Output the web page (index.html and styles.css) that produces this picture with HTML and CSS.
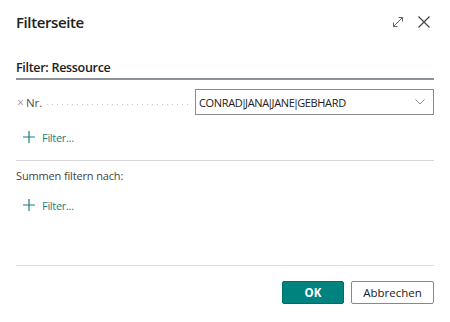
FILE: index.html
```html
<!DOCTYPE html>
<html>
<head>
<meta charset="utf-8">
<link rel="stylesheet" href="styles.css">
</head>
<body>
<div class="dialog">
  <div class="header">
    <div class="title">Filterseite</div>
    <div class="header-icons">
      <svg class="icon-expand" width="12" height="12" viewBox="0 0 12 12"><path d="M1.5 10.5 L10.5 1.5 M6.5 1.5 H10.5 V5.5 M1.5 6.5 V10.5 H5.5" fill="none" stroke="#666" stroke-width="1"/></svg>
      <svg class="icon-close" width="14" height="14" viewBox="0 0 14 14"><path d="M1.5 1.5 L12.5 12.5 M12.5 1.5 L1.5 12.5" fill="none" stroke="#444" stroke-width="1.2"/></svg>
    </div>
  </div>
  <div class="section-title">Filter: Ressource</div>
  <div class="filter-row">
    <div class="field-label"><span class="remove">×</span><span class="name">Nr.</span><span class="dots"></span></div>
    <div class="input">
      <span class="value">CONRAD<span class="pipe">|</span>JANA<span class="pipe">|</span>JANE<span class="pipe">|</span>GEBHARD</span>
      <svg class="chevron" width="10" height="6" viewBox="0 0 10 6"><path d="M0.5 0.5 L5 5 L9.5 0.5" fill="none" stroke="#888" stroke-width="1"/></svg>
    </div>
  </div>
  <div class="add-filter">
    <svg class="plus" width="12" height="12" viewBox="0 0 12 12"><path d="M6 0 V12 M0 6 H12" stroke="#1a7f7f" stroke-width="1.2"/></svg>
    <span>Filter...</span>
  </div>
  <div class="divider"></div>
  <div class="sub-title">Summen filtern nach:</div>
  <div class="add-filter second">
    <svg class="plus" width="12" height="12" viewBox="0 0 12 12"><path d="M6 0 V12 M0 6 H12" stroke="#1a7f7f" stroke-width="1.2"/></svg>
    <span>Filter...</span>
  </div>
  <div class="footer">
    <button class="btn btn-ok">OK</button>
    <button class="btn btn-cancel">Abbrechen</button>
  </div>
</div>
</body>
</html>
```

FILE: styles.css
```css
html, body {
  margin: 0;
  padding: 0;
  background: #ffffff;
}
body {
  font-family: "Open Sans", "Noto Sans", sans-serif;
  color: #212121;
}
.dialog {
  width: 450px;
  height: 322px;
  box-sizing: border-box;
  padding: 0 16px 0 16px;
}
.header {
  height: 44px;
  display: flex;
  align-items: center;
  justify-content: space-between;
}
.title {
  font-size: 15px;
  font-weight: 600;
  letter-spacing: -0.4px;
  color: #212121;
}
.header-icons {
  display: flex;
  align-items: center;
  gap: 13px;
  margin-right: 3px;
}
.icon-expand { display: block; }
.icon-close { display: block; }
.section-title {
  margin-top: 14px;
  height: 20px;
  line-height: 20px;
  font-size: 12.5px;
  font-weight: 600;
  letter-spacing: -0.3px;
  border-bottom: 2px solid #8e939b;
}
.filter-row {
  margin-top: 9px;
  display: flex;
  align-items: center;
  height: 26px;
}
.field-label {
  width: 179px;
  display: flex;
  align-items: center;
  font-size: 11.5px;
  color: #444;
}
.remove {
  color: #999;
  font-size: 12px;
  margin-left: 1px;
  margin-right: 2px;
}
.name {
  color: #505050;
}
.dots {
  flex: 1;
  margin-left: 5px;
  margin-right: 4px;
  height: 1px;
  margin-top: 5px;
  background-image: linear-gradient(to right, #c8c8c8 1px, transparent 1px);
  background-size: 5px 1px;
}
.input {
  flex: 1;
  height: 26px;
  box-sizing: border-box;
  border: 1px solid #8a8a8a;
  display: flex;
  align-items: center;
  justify-content: space-between;
  padding: 0 8px 0 3px;
}
.value {
  font-size: 11px;
  letter-spacing: -0.35px;
  color: #212121;
}
.pipe {
  margin: 0 -1.5px;
}
.chevron { display: block; }
.add-filter {
  margin-top: 11px;
  height: 22px;
  display: flex;
  align-items: center;
  padding-left: 7px;
  gap: 7px;
  font-size: 11px;
  color: #1a7f7f;
  letter-spacing: -0.3px;
}
.plus { display: block; }
.add-filter.second {
  margin-top: 9px;
}
.divider {
  margin-top: 12px;
  height: 1px;
  background: #d6d6d6;
}
.sub-title {
  margin-top: 6px;
  height: 18px;
  line-height: 18px;
  font-size: 11px;
  color: #444;
  letter-spacing: -0.15px;
}
.footer {
  margin-top: 49px;
  border-top: 1px solid #dcdcdc;
  padding-top: 15px;
  display: flex;
  justify-content: flex-end;
  gap: 7px;
}
.btn {
  height: 23px;
  box-sizing: border-box;
  font-family: "Open Sans", "Noto Sans", sans-serif;
  font-size: 11.5px;
  padding: 0;
  margin: 0;
  border-radius: 2px;
}
.btn-ok {
  width: 62px;
  background: #00827f;
  border: 1px solid #006b69;
  color: #ffffff;
  font-weight: 700;
}
.btn-cancel {
  width: 83px;
  background: #ffffff;
  border: 1px solid #8a8886;
  color: #212121;
}
```
